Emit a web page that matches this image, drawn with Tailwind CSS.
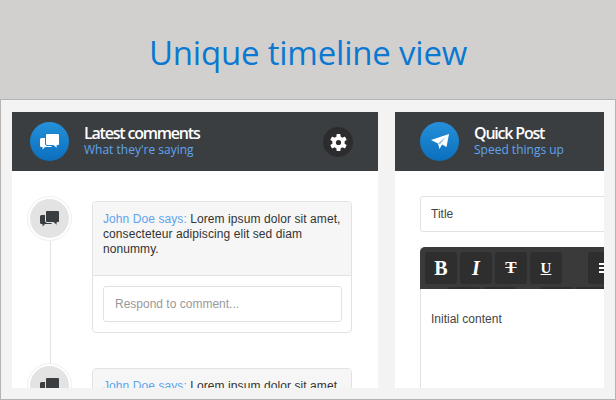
<!DOCTYPE html>
<html lang="en">
<head>
  <meta charset="UTF-8" />
  <title>Unique timeline view</title>
  <script src="https://cdn.jsdelivr.net/npm/@tailwindcss/browser@4"></script>
</head>
<body class="w-[616px] h-[400px] overflow-hidden bg-[#d2d0ce] font-['Liberation_Sans',sans-serif] text-[#333]">

  <!-- Heading band -->
  <div class="h-[99px] flex items-center justify-center pt-[5px]">
    <h1 class="font-['Open_Sans',sans-serif] text-[33px] leading-none tracking-[-0.2px] text-[#0b78d1]">Unique timeline view</h1>
  </div>

  <!-- Frame -->
  <div class="h-[301px] border border-[#b4b4b4] bg-[#f3f3f3] pt-[12px] pl-[11px] flex gap-[17px] overflow-hidden">

    <!-- Latest comments -->
    <section class="w-[366px] h-[276px] bg-white overflow-hidden shrink-0">
      <div class="h-[59px] bg-[#3b3e41] flex items-center pl-[18px] pr-[25px]">
        <div class="w-[39px] h-[39px] rounded-full bg-gradient-to-b from-[#2590da] to-[#0a6fbd] flex items-center justify-center">
          <svg width="20" height="18" viewBox="0 0 20 18">
            <path fill="#fff" d="M1.5 5h9a1.5 1.5 0 0 1 1.5 1.5v6a1.5 1.5 0 0 1-1.5 1.5H5l-2.5 2.5V14h-1A1.5 1.5 0 0 1 0 12.5v-6A1.5 1.5 0 0 1 1.5 5z"/>
            <path fill="#fff" stroke="#1a80cc" d="M7 .5h11A1.5 1.5 0 0 1 19.5 2v9a1.5 1.5 0 0 1-1.5 1.5h-1v3l-3.5-3H7A1.5 1.5 0 0 1 5.500 11V2A1.500 1.500 0 0 1 7 .5z"/>
          </svg>
        </div>
        <div class="ml-[15px] flex-1 font-['Open_Sans',sans-serif] -mt-[2px]">
          <div class="text-[16px] leading-[18px] font-semibold text-white tracking-[-1.2px]">Latest comments</div>
          <div class="text-[12px] leading-[15px] text-[#5ea4ee]">What they're saying</div>
        </div>
        <div class="w-[30px] h-[30px] mt-[1px] rounded-full bg-[#2c2c2e] flex items-center justify-center">
          <svg width="17" height="17" viewBox="0 0 17 17" fill="#fff">
            <rect x="6.500" y="0" width="4" height="17" rx="0.7"/>
            <rect x="6.500" y="0" width="4" height="17" rx="0.7" transform="rotate(60 8.5 8.5)"/>
            <rect x="6.500" y="0" width="4" height="17" rx="0.7" transform="rotate(120 8.5 8.5)"/>
            <circle cx="8.500" cy="8.500" r="6.200"/>
            <circle cx="8.500" cy="8.500" r="2.600" fill="#2c2c2e"/>
          </svg>
        </div>
      </div>

      <div class="relative pt-[30px] pl-[80px] pr-[26px]">
        <!-- timeline line -->
        <div class="absolute left-[38px] top-[60px] w-px h-[140px] bg-[#e2e2e2]"></div>
        <div class="absolute left-[15px] top-[25px] w-[45px] h-[45px] rounded-full border border-[#efefef] bg-white flex items-center justify-center">
          <div class="w-[39px] h-[39px] rounded-full bg-[#e3e3e3] flex items-center justify-center">
            <svg width="20" height="18" viewBox="0 0 20 18">
              <path fill="#3b3e41" d="M1.5 5h9a1.5 1.5 0 0 1 1.5 1.5v6a1.5 1.5 0 0 1-1.5 1.5H5l-2.5 2.5V14h-1A1.5 1.5 0 0 1 0 12.5v-6A1.5 1.5 0 0 1 1.5 5z"/>
              <path fill="#3b3e41" stroke="#e3e3e3" d="M7 .5h11A1.5 1.5 0 0 1 19.5 2v9a1.5 1.5 0 0 1-1.5 1.5h-1v3l-3.5-3H7A1.5 1.5 0 0 1 5.500 11V2A1.500 1.500 0 0 1 7 .5z"/>
            </svg>
          </div>
        </div>
        <div class="absolute left-[15px] top-[192px] w-[45px] h-[45px] rounded-full border border-[#efefef] bg-white flex items-center justify-center">
          <div class="w-[39px] h-[39px] rounded-full bg-[#e3e3e3] flex items-center justify-center">
            <svg width="20" height="18" viewBox="0 0 20 18">
              <path fill="#3b3e41" d="M1.5 5h9a1.5 1.5 0 0 1 1.5 1.5v6a1.5 1.5 0 0 1-1.5 1.5H5l-2.5 2.5V14h-1A1.5 1.5 0 0 1 0 12.5v-6A1.5 1.5 0 0 1 1.5 5z"/>
              <path fill="#3b3e41" stroke="#e3e3e3" d="M7 .5h11A1.5 1.5 0 0 1 19.5 2v9a1.5 1.5 0 0 1-1.5 1.5h-1v3l-3.5-3H7A1.5 1.5 0 0 1 5.500 11V2A1.500 1.500 0 0 1 7 .5z"/>
            </svg>
          </div>
        </div>

        <div class="w-[260px] h-[132px] border border-[#e2e2e2] rounded-[4px] overflow-hidden">
          <div class="h-[74px] bg-[#f6f6f6] border-b border-[#e2e2e2] pl-[10px] pr-[4px] pt-[10px] text-[12px] leading-[15px] tracking-[0.08px] text-[#333]">
            <span class="text-[#5ea4ee]">John Doe says:</span> Lorem ipsum dolor sit amet, consecteteur adipiscing elit sed diam nonummy.
          </div>
          <div class="pl-[10px] pr-[9px] pt-[10px]">
            <div class="h-[36px] border border-[#e2e2e2] rounded-[3px] px-[11px] flex items-center text-[12px] text-[#999]">Respond to comment...</div>
          </div>
        </div>

        <div class="w-[260px] h-[131px] mt-[35px] border border-[#e2e2e2] rounded-[4px] overflow-hidden">
          <div class="h-[74px] bg-[#f6f6f6] border-b border-[#e2e2e2] pl-[10px] pr-[4px] pt-[10px] text-[12px] leading-[15px] tracking-[0.08px] text-[#333]">
            <span class="text-[#5ea4ee]">John Doe says:</span> Lorem ipsum dolor sit amet, consecteteur adipiscing elit sed diam nonummy.
          </div>
        </div>
      </div>
    </section>

    <!-- Quick post -->
    <section class="w-[209px] h-[276px] bg-white overflow-hidden shrink-0">
      <div class="h-[59px] bg-[#3b3e41] flex items-center pl-[25px]">
        <div class="w-[39px] h-[39px] rounded-full bg-gradient-to-b from-[#2590da] to-[#0a6fbd] flex items-center justify-center">
          <svg width="18" height="15" viewBox="0 0 18 15" fill="#fff">
            <path d="M0 6 18 0 15.500 13 11 10.500 8.500 15 7 9.500z"/>
            <path d="M7 9.500 15 2.500 9 10.500z" fill="#1a80cc" opacity="0.5"/>
          </svg>
        </div>
        <div class="ml-[15px] flex-1 font-['Open_Sans',sans-serif] -mt-[2px]">
          <div class="text-[16px] leading-[18px] font-semibold text-white tracking-[-1.2px]">Quick Post</div>
          <div class="text-[12px] leading-[15px] text-[#5ea4ee]">Speed things up</div>
        </div>
      </div>

      <div class="pl-[25px] pt-[25px] w-[260px]">
        <div class="h-[36px] border border-[#e2e2e2] rounded-[3px] px-[10px] flex items-center text-[12px] text-[#444]">Title</div>

        <div class="mt-[15px] border-l border-[#e2e2e2]">
          <div class="relative h-[42px] bg-[#3a3a3a] rounded-tl-[5px] -ml-px overflow-hidden">
            <div class="flex gap-[3px] pl-[5px] pt-[5px] font-['Liberation_Serif',serif] text-white">
              <div class="w-[32px] h-[32px] rounded-[3px] bg-[#2e2e2e] flex items-center justify-center text-[20px] font-bold">B</div>
              <div class="w-[32px] h-[32px] rounded-[3px] bg-[#2e2e2e] flex items-center justify-center text-[20px] font-bold italic">I</div>
              <div class="w-[32px] h-[32px] rounded-[3px] bg-[#2e2e2e] flex items-center justify-center text-[17px] font-bold line-through">T</div>
              <div class="w-[32px] h-[32px] rounded-[3px] bg-[#2e2e2e] flex items-center justify-center text-[15px] font-bold underline">U</div>
              <div class="w-[32px] h-[32px] ml-[23px] rounded-[3px] bg-[#2e2e2e] flex flex-col gap-[2px] items-start justify-center pl-[11px]">
                <span class="w-[14px] h-[2px] bg-white"></span>
                <span class="w-[14px] h-[2px] bg-white"></span>
                <span class="w-[14px] h-[2px] bg-white"></span>
              </div>
            </div>
            <!-- second row peeking out -->
            <div class="absolute left-[28px] top-[40px] flex gap-[3px]">
              <div class="w-[32px] h-[4px] rounded-[3px] bg-[#2e2e2e]"></div>
              <div class="w-[32px] h-[4px] rounded-[3px] bg-[#2e2e2e]"></div>
              <div class="w-[32px] h-[4px] ml-[23px] rounded-[3px] bg-[#2e2e2e]"></div>
              <div class="w-[32px] h-[4px] rounded-[3px] bg-[#2e2e2e]"></div>
            </div>
          </div>
          <div class="h-[120px] pl-[10px] pt-[23px] text-[12px] leading-[15px] text-[#444]">Initial content</div>
        </div>
      </div>
    </section>
  </div>
</body>
</html>
